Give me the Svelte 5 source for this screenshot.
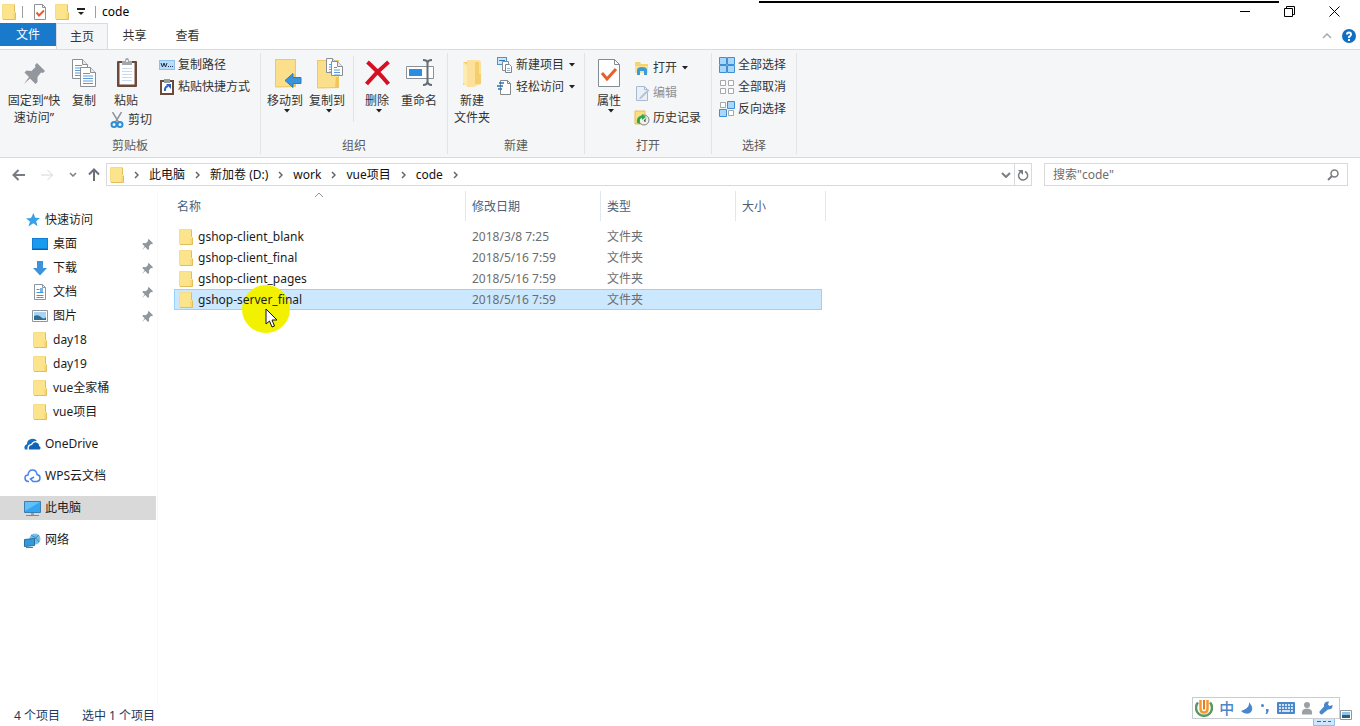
<script>
  const svg = (w, h, body) =>
    `<svg width="${w}" height="${h}" viewBox="0 0 ${w} ${h}" fill="none" aria-hidden="true">${body}</svg>`;

  const pinBody =
    '<path d="M13 0l8 8-2 2-2-.5-3.500 4.500 0 5-2 2-5.500-5.500L0 21l5-7-4.500-4.500 2-2 5 .5 4-4-.5-2z" fill="#92979d"/>';
  const sheet = (x, y, w, h, lines) => {
    let s = `<path d="M${x + 0.5} ${y + 0.5}h${w - 6}l5 5v${h - 6}h-${w - 1}z" fill="#fff" stroke="#8a8f96"/><path d="M${x + w - 5.5} ${y + 0.5}v5h5" stroke="#8a8f96" fill="#e6e8ea"/>`;
    for (let i = 0; i < lines; i++)
      s += `<path d="M${x + 3} ${y + 6.5 + i * 2.5}h${i === 0 ? w - 9 : w - 6}" stroke="#5b9bd5"/>`;
    return s;
  };

  const icons = {
    folder: svg(14, 16, '<path d="M.5 1.500q0-1 1-1h10q1 0 1 1v7h1v6q0 1-1 1h-11q-1 0-1-1z" fill="#fce48d"/><path d="M1 15.500h12.500v-7M12.500 8V.5" stroke="#e3bd57"/><path d="M12 9v6" stroke="#f3cf6c"/><path d="M.5 15V.5H12" stroke="#f6dc86"/>'),
    checkPage: svg(14, 16, '<path d="M1.500.5h8l3 3v12h-11z" fill="#fff" stroke="#8d9298"/><path d="M9.500.5v3h3" stroke="#8d9298"/><path d="M3.500 8.500l2.500 3 5-5" stroke="#ea5a2b" stroke-width="2"/>'),
    pinBig: svg(21, 21, pinBody),
    pinSmall: `<svg width="11" height="11" viewBox="0 0 21 21" aria-hidden="true">${pinBody}</svg>`,
    copy: svg(28, 30, sheet(2, 1, 16, 20, 5) + sheet(10, 9, 16, 20, 5)),
    paste: svg(24, 30, '<g transform="translate(2)"><rect x="1" y="3" width="20" height="26" rx="1" fill="#6b4a3a"/><path d="M3.500 5h15v21.500h-15z" fill="#fff"/><path d="M6 10.500h10M6 13.500h10M6 16.500h10M6 19.500h10M6 22.500h10" stroke="#c8dcef"/><path d="M6 3h3q0-3 2-3t2 3h3v4H6z" fill="#a3a7ab"/><circle cx="11" cy="3" r="1" fill="#fff"/></g>'),
    cut: svg(14, 16, '<path d="M2.500 0l6 10M11.500 0l-6 10" stroke="#8d969e" stroke-width="1.500"/><circle cx="4" cy="12.500" r="2.500" stroke="#2d8fd5" stroke-width="2"/><circle cx="10" cy="12.500" r="2.500" stroke="#2d8fd5" stroke-width="2"/>'),
    path: svg(16, 16, '<rect x=".5" y="3.500" width="15" height="9" fill="#b9dcf8" stroke="#8fc0ea"/><path d="M2 6l1.500 4 1.500-4 1.500 4L8 6" stroke="#1d2f4a"/><path d="M9 9.500h1M11 9.500h1M13 9.500h1" stroke="#1d2f4a"/>'),
    shortcut: svg(14, 16, '<rect x="1" y="2" width="12" height="13" stroke="#6b4a3a" stroke-width="2" fill="#fff"/><path d="M4 0h6v4H4z" fill="#989ca0"/><path d="M5 12q-.5-4 3-5" stroke="#2b62c0" stroke-width="2"/><path d="M6 5h5v5z" fill="#2b62c0"/>'),
    moveTo: svg(34, 30, '<g transform="translate(6)"><path d="M1 1h21v28H1z" fill="#fbdf8b"/><path d="M1.500 29V1.500h20V28.500z" stroke="#edc864"/><path d="M20 16h2v13h-4z" fill="#efc65c"/><path d="M11 22.500l8-7v4h8v6h-8v4z" fill="#3795de" stroke="#2a7cc2"/></g>'),
    copyTo: svg(34, 32, '<g transform="translate(6)"><path d="M1 3h22v28H1z" fill="#fbdf8b"/><path d="M1.500 31V3.500h21V30.500z" stroke="#edc864"/><path d="M20 20h2v11h-3z" fill="#efc65c"/>' + sheet(10, 1, 12, 15, 4) + sheet(15, 4, 12, 15, 4) + '</g>'),
    remove: svg(30, 28, '<path d="M5.500 3q10 9 21 22M26.500 3Q14.500 13 4.500 25" stroke="#d60f22" stroke-width="4"/>'),
    rename: svg(32, 28, '<g transform="translate(2)"><path d="M1.500 7.500h27v12h-27z" fill="#fff" stroke="#8a9098"/><path d="M4 10h13v7H4z" fill="#2a8de0"/><path d="M18 1q4.500 0 4.500 3v18q0 4-4.500 4M27 1q-4.500 0-4.500 3v18q0 4 4.500 4" stroke="#666c73" stroke-width="2"/></g>'),
    newFolder: svg(22, 30, '<path d="M2 4h14l2 3v20H2z" fill="#f6d06c"/><path d="M6 2h12l2 2v22l-7 3H6z" fill="#fde09a"/><path d="M2 4l4 3v22l-4-4z" fill="#fdebb4"/><path d="M14 4h4v12h2v10h-6z" fill="#f5cf6e"/>'),
    newItem: svg(16, 18, '<rect x=".5" y="1.500" width="9" height="7" fill="#cfe7fa" stroke="#4b93cc"/><path d="M2 4.500h6" stroke="#3476ad"/><path d="M5.500 5.500h6v9h-6z" fill="#fff" stroke="#8a8f96"/><path d="M8.500 8.500h4l2 2v6h-6z" fill="#fff" stroke="#7d838a"/><path d="M10 12.500h3M10 14.500h3" stroke="#8cb7da"/>'),
    easy: svg(16, 16, '<path d="M3.500 1.500h7l3 3v11h-10z" fill="#fff" stroke="#83898f"/><path d="M10.500 1.500v3h3" stroke="#83898f"/><path d="M2 4h5M0 7h6M1 10h4" stroke="#2874b8" stroke-width="1.500"/>'),
    props: svg(24, 30, '<path d="M1.500 1.500h16l5 5v22h-21z" fill="#fff" stroke="#858b92"/><path d="M17.500 1.500v5h5" stroke="#858b92"/><path d="M5 15l5 6 9-10" stroke="#e85f28" stroke-width="3"/>'),
    open: svg(16, 16, '<path d="M1 2h5l1 2h7v9H1z" fill="#f6d36c"/><path d="M1 6h13v7H1z" fill="#fbe28f"/><path d="M3 15V10q0-3 5-3t5 3v5h-3v-4H6v4z" fill="#3a9be0"/>'),
    edit: svg(16, 16, '<path d="M2.500 1.500h8l3 3v11h-11z" fill="#eaf0f8" stroke="#a9b9d0"/><path d="M10.500 1.500v3h3" stroke="#a9b9d0"/><path d="M6 12l8-8 1.500 1.500-8 8-2.500 1z" fill="#b7c4d8"/>'),
    history: svg(16, 16, '<path d="M1 1h10v13H1z" fill="#fbdf80" stroke="#e6bf50"/><circle cx="10" cy="10" r="5" fill="#eef2ee" stroke="#7e8884"/><path d="M3 13q-1-7 5-7.500V4l4 3-4 3V8q-3 0-2 6z" fill="#2fa84a"/><path d="M10 11l2-2.500M10 11h2" stroke="#444"/>'),
    all: svg(16, 16, '<g fill="#a9d6fb" stroke="#3f8fd2"><path d="M.5.5h7v7h-7zM8.500.5h7v7h-7zM.5 8.500h7v7h-7zM8.500 8.500h7v7h-7z"/></g>'),
    none: svg(16, 16, '<g fill="#fff" stroke="#a3a8ad"><path d="M1.500 1.500h5v5h-5zM9.500 1.500h5v5h-5zM1.500 9.500h5v5h-5zM9.500 9.500h5v5h-5z"/></g>'),
    invert: svg(16, 16, '<path d="M1.500 1.500h5v5h-5zM9.500 9.500h5v5h-5z" fill="#fff" stroke="#a3a8ad"/><path d="M8.500.5h7v7h-7zM.5 8.500h7v7h-7z" fill="#a9d6fb" stroke="#3f8fd2"/>'),
    caret: svg(6, 4, '<path d="M0 0h6L3 3.500z" fill="#222"/>'),
    qaMenu: svg(8, 8, '<path d="M0 1h8" stroke="#222" stroke-width="2"/><path d="M1 4h6L4 7z" fill="#222"/>'),
    up: svg(10, 6, '<path d="M1 5l4-4 4 4" stroke="#8e9399"/>'),
    upPale: svg(10, 6, '<path d="M1 5l4-4 4 4" stroke="#a6abb0" stroke-width="1.500"/>'),
    down: svg(10, 6, '<path d="M1 1l4 4 4-4" stroke="#7b8086" stroke-width="2"/>'),
    downSmall: svg(8, 5, '<path d="M1 1l3 3 3-3" stroke="#7b8086" stroke-width="1.500"/>'),
    right: svg(5, 8, '<path d="M1 1l3 3-3 3" stroke="#63686e" stroke-width="1.500"/>'),
    help: svg(14, 14, '<circle cx="7" cy="7" r="7" fill="#0f6fc5"/><path d="M5 5.500Q5 3.500 7 3.500t2 2q0 1-2 2.500v1" stroke="#fff" stroke-width="2"/><path d="M6 10h2v2H6z" fill="#fff"/>'),
    min: svg(10, 10, '<path d="M0 4.500h10" stroke="#000"/>'),
    restore: svg(11, 11, '<path d="M.5 2.500h8v8h-8zM2.500 2V.5h8v8H9" stroke="#000"/>'),
    close: svg(11, 11, '<path d="M.5.5l10 10M10.500.5l-10 10" stroke="#000"/>'),
    back: svg(13, 12, '<path d="M13 6H1.500M6.500 1l-5 5 5 5" stroke="#777c82" stroke-width="2"/>'),
    forward: svg(13, 12, '<path d="M0 6h11.500M6.500 1l5 5-5 5" stroke="#d4d6d8"/>'),
    upArrow: svg(12, 13, '<path d="M6 13V1.500M1 6.500l5-5 5 5" stroke="#6b7076" stroke-width="2"/>'),
    refresh: svg(12, 12, '<path d="M8 2.500a4.500 4.500 0 1 1-4.500.4" stroke="#777c82" stroke-width="1.500"/><path d="M1 1h5v5z" fill="#777c82"/>'),
    search: svg(12, 12, '<circle cx="7.500" cy="4.500" r="3.500" stroke="#777c82" stroke-width="1.500"/><path d="M5 7l-4 4" stroke="#777c82" stroke-width="2"/>'),
    star: svg(14, 14, '<path d="M7.500 0l1.700 4.800 4.800.2-3.800 3.200 1.300 5L7.300 10.300 2.500 13.500l1.500-5L0 5.500l5-.4z" fill="#3aa0e8"/>'),
    desktop: svg(16, 14, '<path d="M0 1h16v12H0z" fill="#0f7fd6"/><path d="M1 2h14v9H1z" fill="#1b9bf0"/><path d="M0 12.500h16" stroke="#0b5fae"/>'),
    download: svg(16, 16, '<path d="M5 1h6v7h4l-7 7.500L1 8h4z" fill="#3b93dd"/>'),
    doc: svg(14, 16, '<path d="M1.500.5h8l3 3v12h-11z" fill="#fff" stroke="#8e959c"/><path d="M9.500.5v3h3" stroke="#8e959c"/><path d="M3.500 5.500h3M3.500 8.500h7M3.500 11.500h7M3.500 13.500h7" stroke="#4d93cf"/><path d="M7 4h3v4H7z" fill="#7bb4e2"/>'),
    picture: svg(16, 14, '<path d="M.5 1.500h15v11H.5z" fill="#fff" stroke="#8e959c"/><path d="M2 3h12v8H2z" fill="#a7d4f2"/><path d="M2 7q4-2 7 1t5 0v3H2z" fill="#2d6c94"/>'),
    onedrive: svg(17, 12, '<path d="M1 11.500Q-1 8 3 6q0-4 4-5 4-1 6 2-4-.5-6 3-4 .5-3.500 5.500z" fill="#1670c0"/><path d="M5 11.500q-1-4 3-4.500 2-4 5.500-2 2 1 1.500 3 2 .5 1.500 2.500l-1 1z" fill="#0f62b4"/>'),
    wps: svg(17, 14, '<path d="M5 12.500H4q-3-.5-3-3.500t3-3q.5-5 4.500-5t4.500 4.500q3 .5 3 3.500t-3 3.500H9L6.500 10 10 8" stroke="#4a84ea" stroke-width="1.500"/>'),
    pc: svg(17, 15, '<path d="M.5.5h16v11H.5z" fill="#35a5ef" stroke="#3c7fae"/><path d="M1 1h15L1 10z" fill="#63c1fa"/><path d="M2 14.500h13" stroke="#7d8790"/><path d="M7 12h3v2H7z" fill="#98a2ab"/>'),
    network: svg(17, 15, '<circle cx="11" cy="6" r="5.500" fill="#79bfe8"/><path d="M7 2q5 2 8 7M15 2q-5 3-7 8" stroke="#3a86b8"/><path d="M.5 6.500l10-1v7l-10 1z" fill="#2f9ade" stroke="#2c6f9d"/><path d="M2 14.500h7" stroke="#4f7894"/>'),
    imeLogo: svg(18, 18, '<path d="M3 3.500a8 8 0 1 0 12 0" stroke="#5a9a62" stroke-width="2.500"/><path d="M5.500 1v8.500q0 4 3.500 4t3.500-4V1" stroke="#f09a2a" stroke-width="2.500"/><path d="M9 1v9.500" stroke="#ea7433" stroke-width="2"/>'),
    moon: svg(14, 14, '<path d="M9 1q1 6-8 9 4 4 9 2 5-4-1-11z" fill="#4a86cc"/>'),
    punct: svg(10, 12, '<circle cx="2.500" cy="3.500" r="1.500" fill="#4a86cc"/><path d="M6 7h2.500v2.500L7 12H5.500L6.500 9.500H6z" fill="#4a86cc"/>'),
    keyboard: svg(18, 12, '<rect width="18" height="12" rx="1" fill="#4a86cc"/><path d="M2 3h14M2 6h14" stroke="#fff" stroke-width="1.500" stroke-dasharray="2 1"/><path d="M2 9h2M5 9h8M14 9h2" stroke="#fff" stroke-width="1.500"/>'),
    person: svg(12, 14, '<circle cx="6" cy="4" r="3" fill="#9aa0a6"/><path d="M1 13.500q-1-6 5-6t5 6z" fill="#9aa0a6"/>'),
    wrench: svg(14, 14, '<path d="M13.500 4l-3 1-1.500-1.500 1-3q-4-.5-5 3v2L.5 10.500q-.5 1.500 1 2.500 1 1 2 0L9 8.500q5 0 4.500-4.500z" fill="#4a86cc"/>'),
    viewList: svg(22, 13, '<path d="M.5.5h21v12H.5z" fill="#cce8ff" stroke="#84c3f3"/><path d="M4 8.500h4M10 8.500h3M15 8.500h3" stroke="#52616e"/>'),
    viewLarge: svg(12, 10, '<path d="M.5.500h11v9H.5z" fill="#fff" stroke="#8e959c"/><path d="M2 2h8v3H2z" fill="#8cc4ec"/><path d="M2 5h8v3H2z" fill="#2d6078"/>')
  };

  const tabs = ['主页', '共享', '查看'];
  const crumbs = ['此电脑', '新加卷 (D:)', 'work', 'vue项目', 'code'];
  const quick = [
    { icon: 'desktop', label: '桌面', pinned: true },
    { icon: 'download', label: '下载', pinned: true },
    { icon: 'doc', label: '文档', pinned: true },
    { icon: 'picture', label: '图片', pinned: true },
    { icon: 'folder', label: 'day18' },
    { icon: 'folder', label: 'day19' },
    { icon: 'folder', label: 'vue全家桶' },
    { icon: 'folder', label: 'vue项目' }
  ];
  const roots = [
    { icon: 'onedrive', label: 'OneDrive' },
    { icon: 'wps', label: 'WPS云文档' },
    { icon: 'pc', label: '此电脑' },
    { icon: 'network', label: '网络' }
  ];
  const files = [
    { name: 'gshop-client_blank', date: '2018/3/8 7:25' },
    { name: 'gshop-client_final', date: '2018/5/16 7:59' },
    { name: 'gshop-client_pages', date: '2018/5/16 7:59' },
    { name: 'gshop-server_final', date: '2018/5/16 7:59' }
  ];
  let current = $state('此电脑');
  let selected = $state('gshop-server_final');
</script>

{#snippet ic(name)}<span class="ic">{@html icons[name]}</span>{/snippet}

{#snippet big(icon, lines, menu, wide)}
  <button class="big" class:wide>
    <span class="pic">{@render ic(icon)}</span>
    {#each lines as line}<span class="line">{line}</span>{/each}
    {#if menu}<span class="menu">{@render ic('caret')}</span>{/if}
  </button>
{/snippet}

{#snippet small(icon, label, menu, disabled)}
  <button class="small" {disabled}>
    <span class="slot">{@render ic(icon)}</span>{label}
    {#if menu}<span class="more">{@render ic('caret')}</span>{/if}
  </button>
{/snippet}

<div class="window">
  <header class="titlebar">
    {@render ic('folder')}
    <i class="bar"></i>
    <button aria-label="属性">{@render ic('checkPage')}</button>
    <button aria-label="新建文件夹">{@render ic('folder')}</button>
    <button aria-label="自定义快速访问工具栏">{@render ic('qaMenu')}</button>
    <i class="bar"></i>
    <h1>code</h1>
    <div class="controls">
      <button aria-label="最小化">{@render ic('min')}</button>
      <button aria-label="还原">{@render ic('restore')}</button>
      <button aria-label="关闭">{@render ic('close')}</button>
    </div>
    <div class="edge"></div>
  </header>

  <nav class="tabs">
    <button class="file">文件</button>
    {#each tabs as tab, i}<button class="tab" class:active={i === 0}>{tab}</button>{/each}
    <div class="aside">
      <button aria-label="最小化功能区">{@render ic('upPale')}</button>
      <button aria-label="帮助">{@render ic('help')}</button>
    </div>
  </nav>

  <section class="ribbon">
    <div class="group">
      <div class="tools">
        {@render big('pinBig', ['固定到“快', '速访问”'], false, true)}
        <div class="narrow">{@render big('copy', ['复制'])}</div>
        <div class="clip">
          {@render big('paste', ['粘贴'])}
          {@render small('cut', '剪切')}
        </div>
        <div class="stack">
          {@render small('path', '复制路径')}
          {@render small('shortcut', '粘贴快捷方式')}
        </div>
      </div>
      <h2>剪贴板</h2>
    </div>
    <div class="group organize">
      <div class="tools">
        {@render big('moveTo', ['移动到'], true)}
        {@render big('copyTo', ['复制到'], true)}
        <i class="rule"></i>
        {@render big('remove', ['删除'], true)}
        {@render big('rename', ['重命名'])}
      </div>
      <h2>组织</h2>
    </div>
    <div class="group create">
      <div class="tools">
        {@render big('newFolder', ['新建', '文件夹'])}
        <div class="stack">
          {@render small('newItem', '新建项目', true)}
          {@render small('easy', '轻松访问', true)}
        </div>
      </div>
      <h2>新建</h2>
    </div>
    <div class="group opening">
      <div class="tools">
        {@render big('props', ['属性'], true)}
        <div class="stack loose">
          {@render small('open', '打开', true)}
          {@render small('edit', '编辑', false, true)}
          {@render small('history', '历史记录')}
        </div>
      </div>
      <h2>打开</h2>
    </div>
    <div class="group select">
      <div class="tools">
        <div class="stack">
          {@render small('all', '全部选择')}
          {@render small('none', '全部取消')}
          {@render small('invert', '反向选择')}
        </div>
      </div>
      <h2>选择</h2>
    </div>
  </section>

  <div class="location">
    <div class="history">
      <button aria-label="后退">{@render ic('back')}</button>
      <button aria-label="前进" disabled>{@render ic('forward')}</button>
      <button class="tiny" aria-label="最近浏览的位置">{@render ic('downSmall')}</button>
      <button class="tiny" aria-label="上移">{@render ic('upArrow')}</button>
    </div>
    <div class="address">
      {@render ic('folder')}
      <span class="chev">{@render ic('right')}</span>
      {#each crumbs as crumb}
        <button class="crumb">{crumb}</button><span class="chev">{@render ic('right')}</span>
      {/each}
      <button class="drop" aria-label="以前的位置">{@render ic('down')}</button>
      <button class="reload" aria-label="刷新">{@render ic('refresh')}</button>
    </div>
    <label class="search">
      <input type="text" placeholder={'搜索"code"'} aria-label="搜索" />
      {@render ic('search')}
    </label>
  </div>

  <main>
    <nav class="tree">
      <button class="node top"><span class="slot">{@render ic('star')}</span>快速访问</button>
      {#each quick as item}
        <button class="node child">
          <span class="slot">{@render ic(item.icon)}</span>{item.label}
          {#if item.pinned}<span class="pin">{@render ic('pinSmall')}</span>{/if}
        </button>
      {/each}
      {#each roots as item}
        <button class="node root" class:current={current === item.label} onclick={() => (current = item.label)}>
          <span class="slot">{@render ic(item.icon)}</span>{item.label}
        </button>
      {/each}
    </nav>

    <div class="listing">
      <table>
        <colgroup><col class="c1" /><col class="c2" /><col class="c2" /><col class="c3" /></colgroup>
        <thead>
          <tr>
            <th>名称<span class="sort">{@render ic('up')}</span></th>
            <th>修改日期</th>
            <th>类型</th>
            <th>大小</th>
          </tr>
        </thead>
        <tbody>
          {#each files as file}
            <tr class:selected={selected === file.name} onclick={() => (selected = file.name)}>
              <td><span class="name">{@render ic('folder')}{file.name}</span></td>
              <td>{file.date}</td>
              <td>文件夹</td>
              <td></td>
            </tr>
          {/each}
        </tbody>
      </table>
      <div class="halo"></div>
      <div class="pointer">
        <svg width="13" height="20" viewBox="0 0 13 20" aria-hidden="true">
          <path d="M1 1v15l3.500-3 2.500 6 2.500-1-2.500-6H12z" fill="#fff" stroke="#111" />
        </svg>
      </div>
    </div>
  </main>

  <footer>
    <span>4 个项目</span>
    <span>选中 1 个项目</span>
    <div class="views">
      <button aria-label="详细信息">{@render ic('viewList')}</button>
      <button aria-label="大缩略图">{@render ic('viewLarge')}</button>
    </div>
    <div class="ime">
      {@render ic('imeLogo')}
      <b>中</b>
      {@render ic('moon')}
      {@render ic('punct')}
      {@render ic('keyboard')}
      {@render ic('person')}
      {@render ic('wrench')}
    </div>
  </footer>
</div>

<style>
  :global(body) {
    margin: 0;
    background: #fff;
  }
  .window {
    display: flex;
    flex-direction: column;
    min-height: 100vh;
    font: 12px/16px 'Noto Sans', 'Noto Sans CJK SC', sans-serif;
    color: #1c1c1c;
    background: #fff;
  }
  button {
    display: flex;
    align-items: center;
    margin: 0;
    padding: 0;
    border: 0;
    background: none;
    font: inherit;
    color: inherit;
    white-space: nowrap;
  }
  h1,
  h2 {
    margin: 0;
    font: inherit;
  }
  .ic {
    display: flex;
    flex: none;
  }
  .slot {
    display: flex;
    flex: none;
    align-items: center;
    justify-content: center;
    width: 18px;
  }

  .titlebar {
    position: relative;
    display: flex;
    align-items: center;
    height: 23px;
    padding-left: 2px;
  }
  .titlebar .bar {
    width: 1px;
    height: 12px;
    margin: 0 6px;
    background: #9b9fa3;
  }
  .titlebar > button {
    margin: 0 4px;
  }
  h1 {
    color: #000;
  }
  .controls {
    display: flex;
    align-self: stretch;
    margin-left: auto;
    margin-right: 3px;
  }
  .controls button {
    justify-content: center;
    width: 45px;
  }
  .edge {
    position: absolute;
    top: 1px;
    right: 81px;
    width: 520px;
    height: 2px;
    background: #000;
  }

  .tabs {
    display: flex;
    height: 26px;
    border-bottom: 1px solid #dadbdc;
  }
  .file,
  .tab {
    justify-content: center;
    width: 53px;
    color: #333;
  }
  .file {
    width: 56px;
    height: 23px;
    color: #fff;
    background: #1979ca;
  }
  .tab {
    height: 25px;
  }
  .tab.active {
    width: 52px;
    height: 26px;
    border: 1px solid #dadbdc;
    border-bottom: 0;
    background: #f5f6f7;
  }
  .aside {
    display: flex;
    gap: 10px;
    margin-left: auto;
    margin-right: 4px;
  }

  .ribbon {
    display: flex;
    height: 107px;
    border-bottom: 1px solid #dadbdc;
    background: #f5f6f7;
    color: #333;
  }
  .group {
    display: flex;
    flex-direction: column;
    justify-content: space-between;
    width: 260px;
    margin: 3px 0;
    border-right: 1px solid #e2e3e4;
  }
  .group.organize {
    width: 186px;
  }
  .group.create {
    width: 136px;
  }
  .group.opening {
    width: 126px;
  }
  .group.select {
    width: 84px;
  }
  .organize .tools {
    padding: 0 3px;
  }
  .organize .big {
    width: 42px;
  }
  .select .tools {
    padding-left: 6px;
  }
  .group h2 {
    text-align: center;
    color: #5a5a5a;
  }
  .tools {
    display: flex;
  }
  .big {
    flex-direction: column;
    width: 48px;
    padding-top: 3px;
    align-self: flex-start;
  }
  .big.wide {
    width: 68px;
  }
  .narrow .big {
    width: 32px;
  }
  .pic {
    display: flex;
    align-items: center;
    height: 34px;
    margin-bottom: 2px;
  }
  .line {
    line-height: 17px;
  }
  .menu {
    height: 4px;
    padding-left: 4px;
  }
  .rule {
    width: 1px;
    height: 66px;
    margin: 3px 2px 0 5px;
    background: #e2e3e4;
  }
  .clip {
    width: 50px;
    padding-left: 8px;
  }
  .clip .big {
    width: 36px;
  }
  .small {
    gap: 2px;
    height: 22px;
  }
  .small:disabled {
    color: #8d9095;
  }
  .more {
    margin-left: 3px;
  }
  .stack {
    padding-top: 1px;
  }
  .stack.loose {
    padding-top: 2px;
  }
  .loose .small {
    height: 25px;
  }

  .location {
    display: flex;
    align-items: center;
    height: 33px;
    padding-right: 12px;
  }
  .history {
    display: flex;
    flex: none;
    width: 106px;
    padding-left: 4px;
    box-sizing: border-box;
  }
  .history button {
    justify-content: center;
    width: 29px;
    height: 24px;
  }
  .history .tiny {
    width: 21px;
  }
  .address {
    display: flex;
    flex: 1;
    align-items: center;
    height: 21px;
    padding-left: 3px;
    border: 1px solid #d9d9d9;
    color: #111;
  }
  .chev {
    display: flex;
    justify-content: center;
    width: 25px;
  }
  .drop {
    margin-left: auto;
    padding: 0 3px;
  }
  .reload {
    height: 21px;
    padding: 0 2px;
    border-left: 1px solid #d9d9d9;
  }
  .search {
    display: flex;
    flex: 0 1 286px;
    align-items: center;
    height: 21px;
    margin-left: 12px;
    padding: 0 8px;
    border: 1px solid #d9d9d9;
  }
  .search input {
    flex: 1;
    min-width: 0;
    padding: 0;
    border: 0;
    outline: 0;
    font: inherit;
    background: none;
  }
  .search input::placeholder {
    color: #6d6d6d;
    opacity: 1;
  }

  main {
    display: flex;
    flex: 1;
  }
  .tree {
    flex: none;
    width: 157px;
    padding-top: 17px;
    border-right: 1px solid #f7f7f7;
  }
  .node {
    width: 156px;
    height: 24px;
    gap: 4px;
    padding-left: 23px;
  }
  .node.top {
    padding-left: 24px;
    gap: 3px;
  }
  .node.child {
    padding-left: 31px;
  }
  .node.root {
    margin-top: 8px;
  }
  .node.current {
    background: #d9d9d9;
  }
  .pin {
    margin-left: auto;
    margin-right: 3px;
  }
  .listing {
    position: relative;
    flex: 1;
    padding-left: 16px;
  }
  table {
    width: 652px;
    table-layout: fixed;
    border-collapse: separate;
    border-spacing: 0;
  }
  .c1 {
    width: 292px;
  }
  .c2 {
    width: 135px;
  }
  .c3 {
    width: 90px;
  }
  th {
    position: relative;
    height: 30px;
    padding: 2px 6px 0;
    border-right: 1px solid #dfe8f1;
    box-sizing: border-box;
    text-align: left;
    font-weight: 400;
    color: #4c607a;
  }
  th:first-child {
    padding-left: 3px;
  }
  .sort {
    position: absolute;
    top: 1px;
    left: 140px;
  }
  tbody::before {
    content: '';
    display: block;
    height: 5px;
  }
  td {
    height: 21px;
    padding: 0 6px;
    box-sizing: border-box;
    color: #6d6d6d;
  }
  td:first-child {
    padding-left: 5px;
    color: #1c1c1c;
  }
  .name {
    position: relative;
    z-index: 1;
    display: flex;
    align-items: center;
    gap: 5px;
  }
  .selected td {
    background: #cce8ff;
    box-shadow:
      inset 0 1px #99d1ff,
      inset 0 -1px #99d1ff;
  }
  .selected td:first-child {
    box-shadow:
      inset 0 1px #99d1ff,
      inset 0 -1px #99d1ff,
      inset 1px 0 #99d1ff;
  }
  .selected td:last-child {
    border-right: 4px solid transparent;
    background-clip: padding-box;
    box-shadow:
      inset 0 1px #99d1ff,
      inset 0 -1px #99d1ff,
      inset -1px 0 #99d1ff;
  }
  .halo {
    position: absolute;
    top: 94px;
    left: 84px;
    width: 48px;
    height: 48px;
    border-radius: 50%;
    background: #f2f200;
  }
  .pointer {
    position: absolute;
    z-index: 2;
    top: 117px;
    left: 107px;
  }

  footer {
    position: relative;
    display: flex;
    align-items: center;
    gap: 22px;
    height: 21px;
    padding-left: 14px;
    color: #1e395b;
  }
  .views {
    display: flex;
    align-self: flex-start;
    gap: 5px;
    margin-left: auto;
    margin-right: 8px;
    padding-top: 5px;
  }
  .views button {
    align-items: flex-start;
  }
  .views button:first-child {
    padding-top: 3px;
  }
  .ime {
    position: absolute;
    right: 20px;
    bottom: 7px;
    display: flex;
    align-items: center;
    justify-content: space-between;
    width: 138px;
    height: 20px;
    padding: 0 6px 0 2px;
    border: 1px solid #c9ccd0;
    background: #fff;
  }
  .ime b {
    font-size: 15px;
    font-weight: 500;
    color: #4a86cc;
  }
</style>
